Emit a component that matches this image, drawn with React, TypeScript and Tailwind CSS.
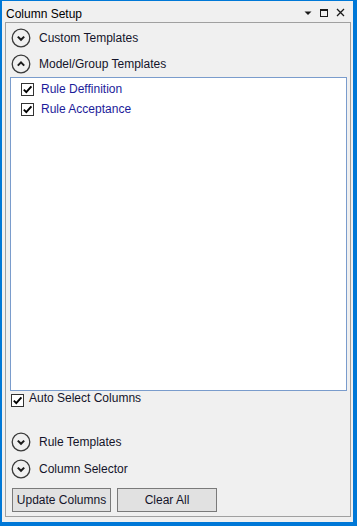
import React from "react";

const FONT = { fontFamily: '"Liberation Sans", Arial, sans-serif' };

const ChevronCircle = ({ up = false }: { up?: boolean }) => (
  <svg width="20" height="20" viewBox="0 0 20 20" className="shrink-0">
    <circle cx="10" cy="10" r="8.8" fill="none" stroke="#3a3a3a" strokeWidth="1.3" />
    {up ? (
      <path d="M6.8 11.6 L10 8.4 L13.2 11.6" fill="none" stroke="#1a1a1a" strokeWidth="2" />
    ) : (
      <path d="M6.8 8.6 L10 11.8 L13.2 8.6" fill="none" stroke="#1a1a1a" strokeWidth="2" />
    )}
  </svg>
);

const CheckBox = () => (
  <div className="w-[13px] h-[13px] border border-[#333333] bg-white flex items-center justify-center shrink-0">
    <svg width="11" height="11" viewBox="0 0 11 11">
      <path d="M1.8 5.6 L4.3 8.2 L9.4 2.4" fill="none" stroke="#000" strokeWidth="1.9" />
    </svg>
  </div>
);

const Section = ({ label, up = false, tall = false }: { label: string; up?: boolean; tall?: boolean }) => (
  <div className={`${tall ? "h-[27px]" : "h-[26px]"} flex items-center pl-[5px] gap-[8px]`}>
    <ChevronCircle up={up} />
    <span className="text-[12px] text-[#14142a] leading-none">{label}</span>
  </div>
);

const ListItem = ({ label }: { label: string }) => (
  <div className="h-[20px] flex items-center pl-[10px] gap-[7px]">
    <CheckBox />
    <span className="text-[12px] text-[#1c1c9a] leading-none">{label}</span>
  </div>
);

export default function App() {
  return (
    <div
      className="w-[357px] h-[526px] bg-[#0078d7] pl-[2px] pt-[1px] pr-[4px] pb-[4px]"
      style={FONT}
    >
      <div className="w-full h-full bg-[#f0f0f0] flex flex-col">
        {/* title */}
        <div className="h-[21px] flex items-end pb-[2px] pl-[4px] pr-[8px]">
          <span className="text-[12px] text-black leading-none flex-1">Column Setup</span>
          <div className="flex items-center gap-[8px] pb-[3px]">
            <svg width="8" height="8" viewBox="0 0 8 8">
              <path d="M0.5 2.5 L7.5 2.5 L4 6 Z" fill="#1a1a1a" />
            </svg>
            <svg width="8" height="8" viewBox="0 0 8 8">
              <rect x="0.5" y="0.5" width="7" height="7" fill="none" stroke="#1a1a1a" strokeWidth="1" />
              <line x1="0.5" y1="1.5" x2="7.5" y2="1.5" stroke="#1a1a1a" strokeWidth="1" />
            </svg>
            <svg width="9" height="9" viewBox="0 0 9 9">
              <path d="M1 1 L8 8 M8 1 L1 8" stroke="#1a1a1a" strokeWidth="1.3" />
            </svg>
          </div>
        </div>

        {/* panel */}
        <div className="flex-1 ml-[3px] mr-[2px] mb-[5px] border border-[#a0a0a0] flex flex-col pt-[2px]">
          <Section label="Custom Templates" />
          <Section label="Model/Group Templates" up />

          <div className="ml-[4px] mr-[3px] h-[314px] bg-white border border-[#7a9ccc] pt-[1px] flex flex-col">
            <ListItem label="Rule Deffinition" />
            <ListItem label="Rule Acceptance" />
          </div>

          <div className="h-[20px] flex pl-[5px] gap-[5px]">
            <div className="pt-[3px]">
              <CheckBox />
            </div>
            <span className="text-[12px] text-[#14142a] leading-none pt-[1px]">Auto Select Columns</span>
          </div>

          <div className="h-[17px]" />
          <Section label="Rule Templates" tall />
          <Section label="Column Selector" tall />

          <div className="flex gap-[6px] pl-[6px] pt-[6px]">
            <button className="w-[99px] h-[24px] bg-[#e1e1e1] border border-[#7a7a7a] text-[12px] text-[#14142a]">
              Update Columns
            </button>
            <button className="w-[100px] h-[24px] bg-[#e1e1e1] border border-[#7a7a7a] text-[12px] text-[#14142a]">
              Clear All
            </button>
          </div>
        </div>
      </div>
    </div>
  );
}
